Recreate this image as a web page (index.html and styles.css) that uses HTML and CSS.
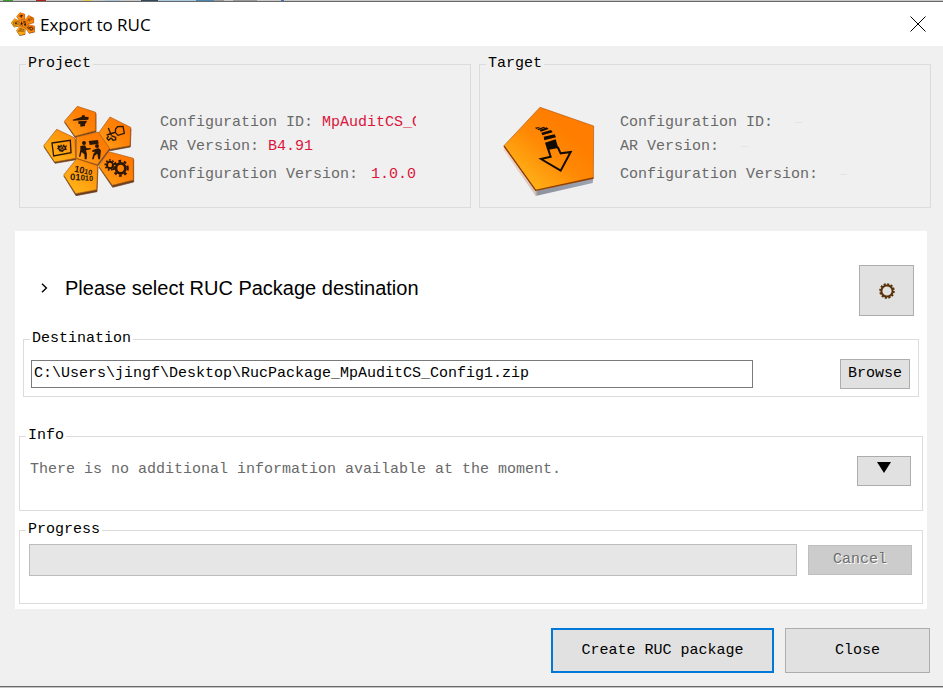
FILE: index.html
```html
<!DOCTYPE html>
<html lang="en">
<head>
<meta charset="utf-8">
<meta name="viewport" content="width=device-width, initial-scale=1">
<title>Export to RUC</title>
<link rel="stylesheet" href="styles.css">
</head>
<body>
<div class="edge edge-top"></div>
<header class="titlebar">
  <svg class="app-icon" viewBox="39 31 276 272" aria-hidden="true"><use href="#flower"/></svg>
  <h1 class="window-title">Export to RUC</h1>
  <button class="window-close" type="button" aria-label="Close window">
    <svg class="close-icon" viewBox="0 0 16 16" aria-hidden="true"><path d="M.5.5l15 15M15.5.5l-15 15"/></svg>
  </button>
</header>

<main class="dialog">
  <div class="summary">
    <fieldset class="group">
      <legend>Project</legend>
      <div class="card">
        <svg class="card-icon" viewBox="39 33 276 270" aria-hidden="true">
          <defs>
            <linearGradient id="orange" x1="0.9" y1="0.2" x2="0.1" y2="1">
              <stop offset="0" stop-color="#ff7800"/><stop offset="0.4" stop-color="#ff8206"/><stop offset="1" stop-color="#ffa41c"/>
            </linearGradient>
            <linearGradient id="amber" x1="0.9" y1="0.1" x2="0.2" y2="1">
              <stop offset="0" stop-color="#ff8a08"/><stop offset="1" stop-color="#ffb81a"/>
            </linearGradient>
            <g id="flower">
              <g fill="#6b3d1c" stroke="#6b3d1c" stroke-width="2" stroke-linejoin="round" transform="translate(1 4)">
                <path d="M142 34l55 18v55l-62 17-32-45z"/>
                <path d="M240 66l62 31-2 55-60 11-35-48z"/>
                <path d="M80 103l55 26 2 61-63 11-33-49z"/>
                <path d="M139 126l66-15 34 49-37 49-63-19z"/>
                <path d="M140 191l63 21-3 74-63 12-36-58z"/>
                <path d="M236 170l74 20v67l-63 16-41-60z"/>
              </g>
              <g stroke="#a85a18" stroke-width="2" stroke-linejoin="round">
                <path fill="url(#orange)" d="M142 34l55 18v55l-62 17-32-45z"/>
                <path fill="url(#orange)" d="M240 66l62 31-2 55-60 11-35-48z"/>
                <path fill="url(#amber)" d="M80 103l55 26 2 61-63 11-33-49z"/>
                <path fill="url(#orange)" d="M139 126l66-15 34 49-37 49-63-19z"/>
                <path fill="url(#amber)" d="M140 191l63 21-3 72-63 12-36-56z"/>
                <path fill="url(#orange)" d="M236 170l74 20v65l-63 16-41-58z"/>
              </g>
              <g fill="#2a1606">
                <path d="M128 74l26-8 3-5 6-1 2 5 11 1-1 8-46 3z"/>
                <path d="M145 79l26-2-3 8-3 1v7l-14 2v-8l-6-1z"/>
                <path fill="none" stroke="#2a1606" stroke-width="4" d="M66 144l55-8 2 37-52 10z"/>
                <path d="M82 153l5-3 3 4 3-6 4 5 5-6 2 6 7-2-3 8 3 5-8 2-5 5-10-2-3-6-5-1 4-4z"/>
                <path fill="none" stroke="#c87a18" stroke-width="3" d="M89 160l8-5 7 4-7 5z"/>
                <path fill="none" stroke="#2a1606" stroke-width="4" d="M257 101l6-6 16-1 4 21-19 6-8-9zM235 99l9 22m-14-1l28-9m-22 12l-5 7 5 6 8-8M244 122l13 5v7l-8 2-5-7"/>
                <path d="M156 144a6 6 0 1 1 12 0 6 6 0 1 1-12 0zM151 153l14-2 5 9 12-1v4l-14 3 3 11-1 16h-6l-1-15-8-7-4 14h-4l4-20z"/>
                <path d="M176 138l28-3 2 11-27 4z"/>
                <path d="M195 153a6 6 0 1 1 12 0 6 6 0 1 1-12 0zM187 166l18-7 8 7-3 27h-5l-3-17-8 6-3 11h-5l4-16 5-7-8 1z"/>
                <path fill="none" stroke="#2a1606" stroke-width="6" d="M249 210a9 10 0 1 0-18 0 9 10 0 1 0 18 0"/>
                <path fill="none" stroke="#2a1606" stroke-width="5" stroke-dasharray="5 5" d="M254 210a14 15 0 1 0-28 0 14 15 0 1 0 28 0"/>
                <path fill="none" stroke="#2a1606" stroke-width="8" d="M286 220a14 15 0 1 0-28 0 14 15 0 1 0 28 0"/>
                <path fill="none" stroke="#2a1606" stroke-width="7" stroke-dasharray="8 8" d="M293 220a21 22 0 1 0-42 0 21 22 0 1 0 42 0"/>
              </g>
              <g class="binary">
                <text x="131" y="230" transform="rotate(11 131 230)"><tspan font-size="28">10</tspan><tspan font-size="22">10</tspan></text>
                <text x="120" y="255" transform="rotate(2 120 255)"><tspan font-size="28">01</tspan><tspan font-size="24">0</tspan><tspan font-size="22">10</tspan></text>
              </g>
            </g>
          </defs>
          <use href="#flower"/>
        </svg>
        <dl class="facts facts-project">
          <div class="fact"><dt>Configuration ID:</dt><dd>MpAuditCS_Config1</dd></div>
          <div class="fact"><dt>AR Version:</dt><dd>B4.91</dd></div>
          <div class="fact fact-version"><dt>Configuration Version:</dt><dd>1.0.0</dd></div>
        </dl>
      </div>
    </fieldset>

    <fieldset class="group">
      <legend>Target</legend>
      <div class="card">
        <svg class="card-icon" viewBox="39 33 276 270" aria-hidden="true">
          <defs>
            <linearGradient id="face" x1="0.75" y1="0.3" x2="0.2" y2="0.9">
              <stop offset="0" stop-color="#ff7d00"/><stop offset="0.4" stop-color="#ff8804"/><stop offset="1" stop-color="#ffb319"/>
            </linearGradient>
            <linearGradient id="side" x1="0" y1="0" x2="1" y2="0">
              <stop offset="0" stop-color="#f3d3bd"/><stop offset="0.35" stop-color="#d8c5bd"/><stop offset="0.38" stop-color="#8d929c"/><stop offset="1" stop-color="#9da3b3"/>
            </linearGradient>
          </defs>
          <path fill="url(#side)" d="M42 152l95 135 173-37-2 14-171 39-96-138z"/>
          <path fill="url(#face)" stroke="#b5560d" stroke-width="2" d="M150 37l161 56-1 157-173 37-95-135z"/>
          <path fill="none" stroke="#8c3d08" stroke-width="4" d="M42 153l95 133 173-37"/>
          <path fill="none" stroke="#130b02" stroke-width="6" d="M174 160l8 25-29 7 59 35 30-56-30 4-9-19"/>
          <path fill="#130b02" d="M165 143l32-10 8 26-33 6zM161 125l33-7 4 9-35 9zM154 113l29-8 5 7-31 9zM149 105l21-8 6 5-24 8zM142 102l20-7 4 2-21 9zM135 98l17-3-13 7z"/>
        </svg>
        <dl class="facts facts-target">
          <div class="fact"><dt>Configuration ID:</dt><dd>–</dd></div>
          <div class="fact"><dt>AR Version:</dt><dd>–</dd></div>
          <div class="fact fact-version"><dt>Configuration Version:</dt><dd>–</dd></div>
        </dl>
      </div>
    </fieldset>
  </div>

  <section class="panel">
    <div class="step">
      <div class="step-text">
        <svg class="chevron" viewBox="0 0 7 10" aria-hidden="true"><path d="M1 .8L5.4 5 1 9.2"/></svg>
        <h2 class="step-title">Please select RUC Package destination</h2>
      </div>
      <button class="button settings" type="button" aria-label="Settings">
        <svg class="gear" viewBox="0 0 16 16" aria-hidden="true">
          <circle cx="8" cy="8" r="6.8" stroke-width="2" stroke-dasharray="2.1 1.46"/>
          <circle cx="8" cy="8" r="5.6" stroke-width="2"/>
        </svg>
      </button>
    </div>

    <fieldset class="group destination">
      <legend id="destination-label">Destination</legend>
      <div class="destination-row">
        <input class="path" type="text" aria-labelledby="destination-label" value="C:\Users\jingf\Desktop\RucPackage_MpAuditCS_Config1.zip">
        <button class="button browse" type="button">Browse</button>
      </div>
    </fieldset>

    <fieldset class="group info">
      <legend>Info</legend>
      <div class="info-row">
        <p class="message">There is no additional information available at the moment.</p>
        <button class="button expand" type="button" aria-label="Show details">
          <svg class="triangle" viewBox="0 0 14 11" aria-hidden="true"><path d="M0 0h14L7 11z"/></svg>
        </button>
      </div>
    </fieldset>

    <fieldset class="group progress">
      <legend id="progress-label">Progress</legend>
      <div class="progress-row">
        <progress class="bar" value="0" max="100" aria-labelledby="progress-label"></progress>
        <button class="button cancel" type="button" disabled>Cancel</button>
      </div>
    </fieldset>
  </section>

  <footer class="actions">
    <button class="button create" type="button">Create RUC package</button>
    <button class="button close" type="button">Close</button>
  </footer>
</main>
<div class="edge edge-bottom"></div>
</body>
</html>
```

FILE: styles.css
```css
* {
  box-sizing: border-box;
}

body {
  display: flex;
  flex-direction: column;
  min-height: 100vh;
  margin: 0;
  background: #f0f0f0;
  color: #000;
  font: 15px/20px "Liberation Mono", monospace;
}

h1,
h2,
p,
dl,
dd {
  margin: 0;
}

svg {
  display: block;
}

/* Window edges */
.edge {
  height: 2px;
  flex: none;
}

.edge-top {
  border-bottom: 1px solid #696969;
  background: linear-gradient(90deg,
    #c8c8c8 3px, #3c9a28 3px 13px, #c8c8c8 13px 36px, #b22020 36px 46px,
    #c8c8c8 46px 82px, #e0c860 82px 92px, #c8c8c8 92px 105px, #a8c4d8 105px 120px,
    #c8c8c8 120px 141px, #33475a 141px 158px, #a8c8e0 158px 196px, #4c86b0 196px 214px,
    #999 214px 224px, #c8c8c8 224px 233px, #999 233px 257px, #c8c8c8 257px 281px,
    #3c74c0 281px 284px, #c8c8c8 284px);
}

.edge-bottom {
  border-top: 1px solid #696969;
  background: #c4c4c4;
}

/* Title bar */
.titlebar {
  display: flex;
  align-items: center;
  height: 44px;
  padding: 0 17px 0 11px;
  background: #fff;
}

.app-icon {
  width: 24px;
  height: 24px;
  margin-right: 5px;
}

.window-title {
  flex: 1;
  padding-top: 2px;
  font: 17px/24px "Open Sans", "Noto Sans", sans-serif;
}

.window-close {
  padding: 0;
  border: 0;
  background: none;
}

.close-icon {
  width: 16px;
  height: 16px;
  fill: none;
  stroke: #000;
}

/* Group boxes */
.dialog {
  flex: 1;
  padding-top: 8px;
}

.group {
  min-width: 0;
  margin: 0;
  padding: 0;
  border: 1px solid #dcdcdc;
}

.group legend {
  margin-left: 6px;
  padding: 0 2px;
}

.summary {
  display: grid;
  grid-template-columns: 1fr 1fr;
  gap: 8px;
  margin: 0 12px 23px 19px;
}

.card {
  display: flex;
  align-items: center;
  gap: 25px;
  padding: 32px 54px 11px 23px;
}

.card-icon {
  flex: none;
  width: 92px;
  height: 90px;
}

.binary {
  fill: #2a1606;
  font-family: "Liberation Sans", sans-serif;
  font-weight: bold;
}

.facts {
  flex: 1;
  min-width: 0;
  padding-bottom: 4px;
  overflow: hidden;
  color: #696969;
  white-space: nowrap;
}

.fact {
  display: flex;
  gap: 9px;
  margin-bottom: 4px;
}

.fact-version {
  margin: 8px 0 0;
}

.facts-project dd {
  color: #dc143c;
}

.facts-project .fact-version {
  gap: 13px;
}

.facts-target .fact {
  gap: 21px;
}

.facts-target dd {
  color: #e3e3e3;
}

/* Buttons */
.button {
  flex: none;
  padding: 0;
  border: 1px solid #adadad;
  background: #e1e1e1;
  color: #000;
  font: inherit;
}

/* White panel */
.panel {
  margin: 0 16px 0 15px;
  padding: 34px 4px 5px;
  background: #fff;
}

.step {
  display: flex;
  align-items: center;
  padding: 0 9px 0 22px;
}

.step-text {
  display: flex;
  flex: 1;
  align-items: center;
  gap: 17px;
  padding-bottom: 5px;
}

.chevron {
  width: 7px;
  height: 10px;
  fill: none;
  stroke: #000;
  stroke-width: 1.4;
}

.step-title {
  font: 20px/24px "Liberation Sans", Arial, sans-serif;
}

.settings {
  display: grid;
  place-items: center;
  width: 55px;
  height: 51px;
}

.gear {
  width: 16px;
  height: 16px;
  fill: none;
  stroke: #5a320a;
}

.destination {
  margin: 13px 4px 29px;
}

.destination-row {
  display: flex;
  align-items: center;
  gap: 87px;
  padding: 10px 8px 7px 7px;
}

.path {
  flex: 1;
  min-width: 0;
  height: 28px;
  padding: 0 2px 2px;
  border: 1px solid #7a7a7a;
  background: #fff;
  color: #000;
  font: inherit;
}

.browse {
  width: 70px;
  height: 30px;
}

.info {
  margin-bottom: 9px;
}

.info-row {
  display: flex;
  justify-content: space-between;
  padding: 10px 11px 24px 10px;
}

.message {
  padding-top: 4px;
  color: #696969;
}

.expand {
  display: grid;
  justify-items: center;
  align-items: start;
  width: 54px;
  height: 30px;
  padding-top: 5px;
}

.triangle {
  width: 14px;
  height: 11px;
}

.progress-row {
  display: flex;
  align-items: center;
  gap: 11px;
  padding: 4px 10px 27px 9px;
}

.bar {
  flex: 1;
  min-width: 0;
  height: 32px;
  border: 1px solid #bcbcbc;
  background: #e6e6e6;
  appearance: none;
}

.bar::-webkit-progress-bar {
  background: #e6e6e6;
}

.cancel {
  width: 104px;
  height: 30px;
  border-color: #bfbfbf;
  background: #ccc;
  color: #6d6d6d;
  text-shadow: 1px 1px #fff;
}

/* Footer */
.actions {
  display: flex;
  justify-content: flex-end;
  gap: 11px;
  padding: 19px 13px 13px;
}

.create,
.close {
  height: 45px;
}

.create {
  width: 223px;
  border: 2px solid #0078d7;
}

.close {
  width: 145px;
}
```
